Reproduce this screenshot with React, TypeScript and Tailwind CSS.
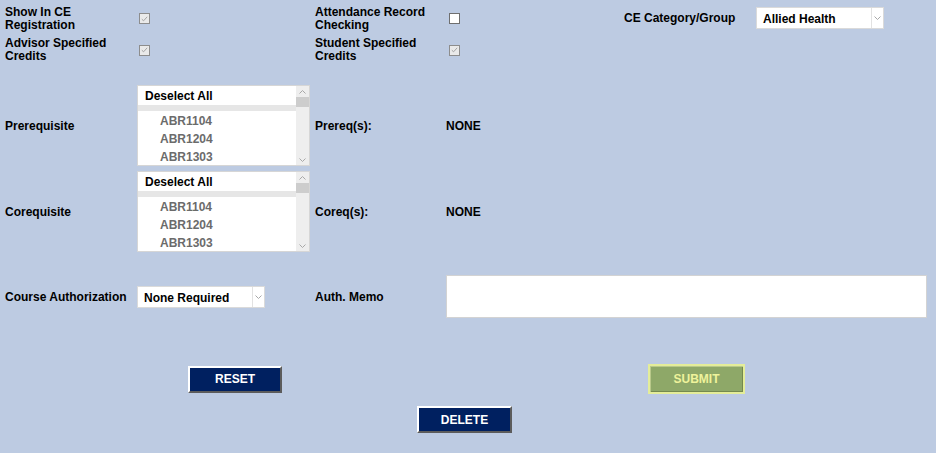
import React from "react";

const font = "font-['Liberation_Sans',Arial,sans-serif]";

const Label = ({ lines }: { lines: string[] }) => (
    <div className="pt-[2px] text-[12px] leading-[13px] font-bold text-black">
        {lines.map((line) => (
            <div key={line}>{line}</div>
        ))}
    </div>
);

const CheckBox = ({ checked }: { checked: boolean }) =>
    checked ? (
        <span className="flex h-[11px] w-[11px] items-center justify-center border border-[#8d8d8d] bg-[#eaeaea]">
            <svg width="7" height="6" viewBox="0 0 7 6">
                <polyline points="0.8,3.2 2.6,4.8 6.2,0.8" fill="none" stroke="#a3a3a3" strokeWidth="1" />
            </svg>
        </span>
    ) : (
        <span className="block h-[11px] w-[11px] border border-[#6f6f6f] bg-white" />
    );

const Chevron = ({ up = false }: { up?: boolean }) => (
    <svg width="7" height="4" viewBox="0 0 7 4">
        <polyline
            points={up ? "0.5,3.5 3.5,0.5 6.5,3.5" : "0.5,0.5 3.5,3.5 6.5,0.5"}
            fill="none"
            stroke="#a8a8a8"
            strokeWidth="1"
        />
    </svg>
);

const SelectBox = ({ value, width }: { value: string; width: string }) => (
    <div className={`flex h-[22px] ${width} border border-[#dadada] bg-white`}>
        <div className="flex flex-1 items-center pl-[6px] pt-[2px] text-[12px] font-bold text-black">{value}</div>
        <div className="flex w-[12px] items-center justify-center border-l border-[#e2e2e2]">
            <Chevron />
        </div>
    </div>
);

const ListBox = ({ items }: { items: string[] }) => (
    <div className="flex h-[81px] w-[173px] border border-[#d6d6d6] bg-white">
        <div className="flex flex-1 flex-col">
            <div className="flex h-[18px] items-center pl-[7px] pt-[2px] text-[12px] font-bold text-black">Deselect All</div>
            <div className="mt-[1px] h-[6px] bg-[#e6e6e6]" />
            {items.map((item) => (
                <div key={item} className="flex h-[18px] items-center pl-[22px] pt-[2px] text-[12px] font-bold text-[#6b6b6b]">
                    {item}
                </div>
            ))}
        </div>
        <div className="flex w-[13px] flex-col bg-[#eeeeee]">
            <div className="flex h-[11px] items-center justify-center">
                <Chevron up />
            </div>
            <div className="h-[10px] bg-[#cdcdcd]" />
            <div className="flex-1" />
            <div className="flex h-[11px] items-center justify-center">
                <Chevron />
            </div>
        </div>
    </div>
);

const courses = ["ABR1104", "ABR1204", "ABR1303"];

const grid = "grid grid-cols-[132px_178px_131px_178px_132px_1fr] items-center pl-[5px]";

export default function App() {
    return (
        <div className={`${font} flex h-[453px] w-[936px] flex-col bg-[#bdcbe2] pt-[2px]`}>
            <div className={`${grid} h-[31px]`}>
                <Label lines={["Show In CE", "Registration"]} />
                <div className="pl-[2px] pt-[2px]">
                    <CheckBox checked />
                </div>
                <Label lines={["Attendance Record", "Checking"]} />
                <div className="pl-[3px] pt-[2px]">
                    <CheckBox checked={false} />
                </div>
                <Label lines={["CE Category/Group"]} />
                <SelectBox value="Allied Health" width="w-[128px]" />
            </div>

            <div className={`${grid} h-[32px]`}>
                <Label lines={["Advisor Specified", "Credits"]} />
                <div className="pl-[2px] pt-[2px]">
                    <CheckBox checked />
                </div>
                <Label lines={["Student Specified", "Credits"]} />
                <div className="pl-[3px] pt-[2px]">
                    <CheckBox checked />
                </div>
            </div>

            <div className={`${grid} mt-[20px] h-[81px]`}>
                <Label lines={["Prerequisite"]} />
                <ListBox items={courses} />
                <Label lines={["Prereq(s):"]} />
                <Label lines={["NONE"]} />
            </div>

            <div className={`${grid} mt-[5px] h-[81px]`}>
                <Label lines={["Corequisite"]} />
                <ListBox items={courses} />
                <Label lines={["Coreq(s):"]} />
                <Label lines={["NONE"]} />
            </div>

            <div className={`${grid} mt-[23px] h-[43px]`}>
                <Label lines={["Course Authorization"]} />
                <SelectBox value="None Required" width="w-[128px]" />
                <Label lines={["Auth. Memo"]} />
                <textarea className="col-span-3 h-[43px] w-[481px] resize-none border border-[#d3d3d3] bg-white outline-none" />
            </div>

            <div className="mt-[46px] flex h-[30px] items-center">
                <button className="ml-[188px] h-[27px] w-[94px] border-2 border-t-white border-l-white border-r-[#5c5c5c] border-b-[#5c5c5c] bg-[#002060] text-[12px] font-bold text-white">
                    RESET
                </button>
                <button className="ml-[366px] h-[30px] w-[97px] border-2 border-[#e4ed99] bg-[#8ea868] text-[12px] font-bold text-[#eef39b] shadow-[inset_1px_1px_0_#b9c98a,inset_-1px_-1px_0_#74894f]">
                    SUBMIT
                </button>
            </div>

            <div className="mt-[12px] flex">
                <button className="ml-[417px] h-[27px] w-[95px] border-2 border-t-white border-l-white border-r-[#5c5c5c] border-b-[#5c5c5c] bg-[#002060] text-[12px] font-bold text-white">
                    DELETE
                </button>
            </div>
        </div>
    );
}
